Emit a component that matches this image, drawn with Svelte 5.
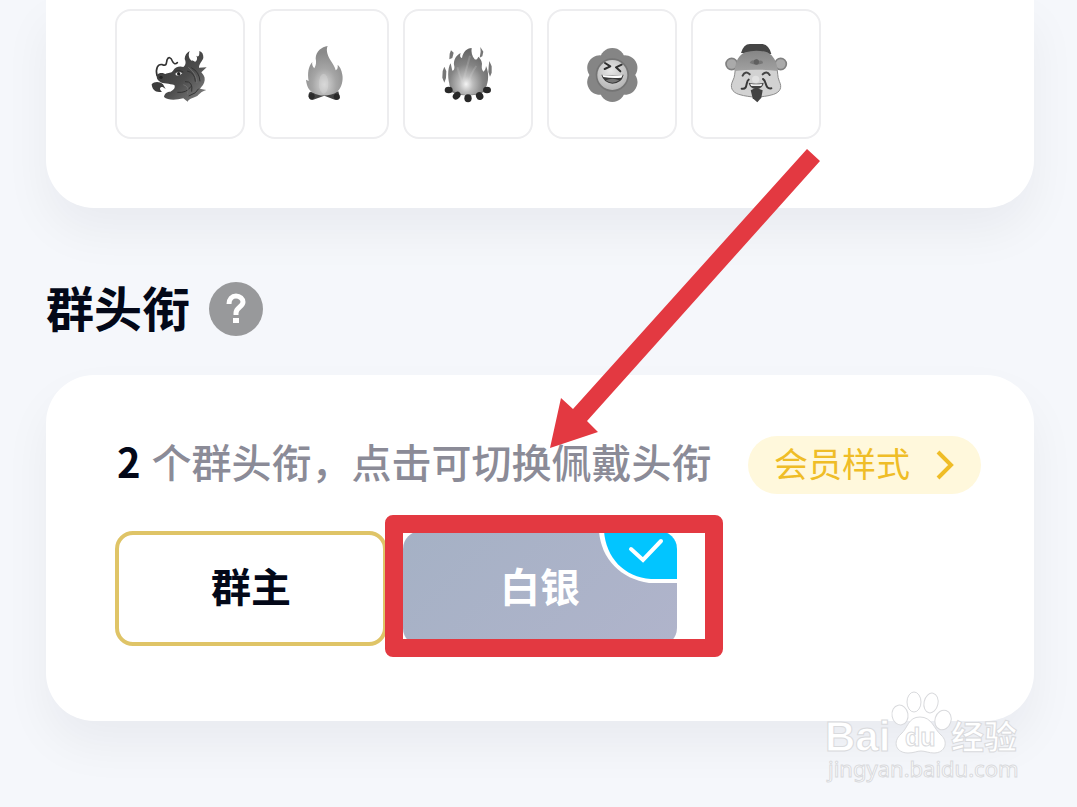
<script>
  const badges = [
    { id: 'dragon', label: '龙' },
    { id: 'flame', label: '火苗' },
    { id: 'bonfire', label: '篝火' },
    { id: 'flower', label: '笑脸花' },
    { id: 'fortune', label: '财神' }
  ];
  const petals = [0, 60, 120, 180, 240, 300];
  let selected = $state('silver');
</script>

<main class="page">
  <section class="card badges">
    {#each badges as badge}
      <button class="tile" aria-label={badge.label}>
        <svg viewBox="0 0 240 270" aria-hidden="true">
          {#if badge.id === 'dragon'}
            <defs>
              <linearGradient id="dragonSkin" x1="0" y1="0" x2="1" y2="1">
                <stop offset="0" stop-color="#303030" />
                <stop offset=".55" stop-color="#4c4c4c" />
                <stop offset="1" stop-color="#888" />
              </linearGradient>
            </defs>
            <path d="M51 137C46 116 53 101 67 104C79 109 79 102 81 90C85 79 93 82 97 93C101 103 107 103 112 98" fill="none" stroke="#333" stroke-width="5" stroke-linecap="round" />
            <path d="M51 135C58 126 70 129 76 132C85 127 94 130 99 122C106 111 118 107 130 111C137 106 139 97 134 87C134 76 140 68 149 63C143 77 148 86 154 92C158 91 162 93 165 96C172 91 173 84 169 77C174 81 179 81 178 63C187 66 191 74 190 84C187 94 177 101 177 113L200 112L184 127C191 136 195 140 194 151C193 162 186 169 180 176L199 180C181 185 178 194 170 199C162 204 149 204 143 215L130 205C106 211 83 211 72 201C73 190 82 185 91 185C101 180 107 174 103 165C89 160 68 161 60 155C51 150 49 143 51 135Z" fill="url(#dragonSkin)" />
            <path d="M35 163C43 154 59 154 69 163L77 177L68 171C60 170 56 177 66 185C48 190 36 179 35 163Z" fill="#3d3d3d" />
            <path d="M106 131Q114 122 127 130Q120 138 108 136Z" fill="#eee" />
            <circle cx="116" cy="131" r="5" fill="#222" />
            <path d="M105 124Q117 117 130 126M141 123Q165 127 166 155M154 113Q178 125 180 154M135 155Q160 153 155 185M112 187Q140 190 153 169M146 198Q170 190 176 176" fill="none" stroke="#333" stroke-width="3" />
            <path d="M145 112Q170 130 171 159M130 164Q150 169 142 193" fill="none" stroke="#707070" stroke-width="3" />
            <circle cx="63" cy="142" r="5" fill="#222" />
          {:else if badge.id === 'flame'}
            <defs>
              <radialGradient id="flameGlow" cx=".5" cy=".78" r=".65">
                <stop offset="0" stop-color="#d7d7d7" />
                <stop offset=".5" stop-color="#a5a5a5" />
                <stop offset="1" stop-color="#8a8a8a" />
              </radialGradient>
            </defs>
            <path d="M78 185Q91 188 119 194Q150 188 163 184L168 204Q162 214 148 208L121 197L92 208Q79 213 75 203Q71 191 78 185Z" fill="#444" />
            <circle cx="83" cy="199" r="9" fill="#292929" /><circle cx="158" cy="200" r="9" fill="#292929" />
            <path d="M131 48C113 51 96 63 95 85C97 97 97 105 91 115C86 110 83 102 85 96C73 109 70 131 74 153L66 149C68 167 74 181 87 188C104 200 142 199 159 186C174 173 178 149 175 134C173 118 166 108 161 104C162 114 160 118 155 121C151 102 135 91 130 70C128 62 128 54 131 48Z" fill="url(#flameGlow)" />
            <ellipse cx="119" cy="161" rx="14" ry="30" fill="#ddd" opacity=".35" />
          {:else if badge.id === 'bonfire'}
            <defs>
              <radialGradient id="bonfireGlow" cx=".45" cy=".77" r=".7">
                <stop offset="0" stop-color="#f4f4f4" />
                <stop offset=".25" stop-color="#bbb" />
                <stop offset=".6" stop-color="#858585" />
                <stop offset="1" stop-color="#686868" />
              </radialGradient>
            </defs>
            <path d="M64 163Q120 218 176 163L170 185Q121 207 71 187Z" fill="#777" />
            <path d="M131 54C116 55 105 66 102 84C95 82 96 75 98 69C84 76 76 91 78 105C81 114 78 122 73 122L68 100C58 114 58 151 68 173C84 202 156 202 172 174C183 157 183 126 174 108C173 116 172 121 166 125C160 116 161 111 162 101C161 91 157 86 151 80C148 87 145 90 140 88C132 79 129 65 131 54Z" fill="url(#bonfireGlow)" />
            <path d="M126 77Q114 120 106 154M145 108Q128 130 123 158M88 112Q94 137 105 163" fill="none" stroke="#ddd" stroke-width="6" opacity=".2" />
            <path d="M69 61L77 68L73 84L64 88L65 71ZM157 51L166 65L163 79L155 83L158 65ZM49 110L55 124L54 144L49 158L43 143L44 123ZM184 93L191 109L191 128L186 140L181 126L182 109Z" fill="#777" />
            <g fill="#292929">
              <ellipse cx="62" cy="180" rx="12" ry="10" /><ellipse cx="86" cy="197" rx="13" ry="10" transform="rotate(-45 86 197)" />
              <ellipse cx="120" cy="205" rx="11" ry="12" /><ellipse cx="155" cy="198" rx="11" ry="12" transform="rotate(-25 155 198)" />
              <ellipse cx="177" cy="180" rx="12" ry="10" />
            </g>
          {:else if badge.id === 'flower'}
            <defs>
              <radialGradient id="faceGlow" cx=".45" cy=".35" r=".65">
                <stop offset="0" stop-color="#e8e8e8" /><stop offset="1" stop-color="#b5b5b5" />
              </radialGradient>
            </defs>
            <circle cx="121" cy="135" r="66" fill="#808080" />
            {#each petals as angle}
              <ellipse cx="121" cy="89" rx="37" ry="35" fill="#858585" transform={`rotate(${angle} 121 135)`} />
            {/each}
            <circle cx="121" cy="135" r="50" fill="#747474" />
            <circle cx="121" cy="135" r="45" fill="url(#faceGlow)" />
            <path d="M99 99L115 109L98 117M149 104L132 112L145 124" fill="none" stroke="#2f2f2f" stroke-width="6" stroke-linecap="round" stroke-linejoin="round" />
            <path d="M88 134Q121 139 155 134Q149 160 121 161Q95 158 88 134Z" fill="#393939" />
            <path d="M91 135Q121 140 152 135L148 143Q119 145 94 141Z" fill="#fff" />
            <path d="M101 151Q121 141 142 151Q121 165 101 151Z" fill="#777" />
          {:else}
            <defs>
              <linearGradient id="hatShade" x1="0" y1="0" x2="0" y2="1">
                <stop offset="0" stop-color="#858585" /><stop offset="1" stop-color="#a1a1a1" />
              </linearGradient>
            </defs>
            <circle cx="47" cy="102" r="17" fill="#aaa" stroke="#808080" stroke-width="5" />
            <circle cx="194" cy="102" r="17" fill="#aaa" stroke="#808080" stroke-width="5" />
            <path d="M75 69Q83 41 103 42H140Q160 46 166 72Z" fill="#454545" />
            <path d="M60 110C55 128 58 138 50 153C41 172 48 186 68 193C88 199 103 200 120 202C138 200 154 199 173 193C193 186 199 172 190 154C183 138 187 128 181 110Z" fill="#d2d2d2" stroke="#8c8c8c" stroke-width="3" />
            <path d="M56 123Q60 77 88 67Q121 57 154 67Q180 79 186 123Q120 115 56 123Z" fill="url(#hatShade)" />
            <path d="M101 99Q105 88 116 92Q122 83 129 92Q141 89 141 100Q121 108 101 99Z" fill="#777" />
            <circle cx="121" cy="96" r="8" fill="#5f5f5f" />
            <path d="M80 137Q87 121 101 133M140 133Q152 121 161 135" fill="none" stroke="#444" stroke-width="6" stroke-linecap="round" />
            <circle cx="119" cy="148" r="11" fill="#e2e2e2" />
            <path d="M98 158Q120 164 143 158Q141 176 120 178Q100 174 98 158Z" fill="#444" />
            <path d="M102 161Q121 165 139 161L136 168H106Z" fill="#eee" />
            <path d="M98 149C88 154 97 180 77 176M141 147C153 153 145 178 166 175" fill="none" stroke="#393939" stroke-width="6" stroke-linecap="round" />
            <path d="M104 181Q119 170 140 181L136 203L124 217L110 205Z" fill="#424242" />
          {/if}
        </svg>
      </button>
    {/each}
  </section>

  <header class="heading">
    <h1>群头衔</h1>
    <button class="help" aria-label="帮助">
      <svg viewBox="0 0 54 54" aria-hidden="true">
        <circle cx="27" cy="27" r="27" fill="#98999b" />
        <path d="M20 22C20 17 23 14 27 14C31 14 34 17 34 20C34 25 27 25 27 31V33" fill="none" stroke="#fff" stroke-width="5" />
        <rect x="24" y="36" width="6" height="5" fill="#fff" />
      </svg>
    </button>
  </header>

  <section class="card titles">
    <div class="summary">
      <p><b>2</b> 个群头衔，点击可切换佩戴头衔</p>
      <a class="member" href="#member">
        <span>会员样式</span>
        <svg viewBox="0 0 20 30" aria-hidden="true"><path d="M3 2L16 15L3 28" fill="none" stroke="#efbd27" stroke-width="4" /></svg>
      </a>
    </div>
    <div class="options">
      <button class="option owner" aria-pressed={selected === 'owner'} onclick={() => (selected = 'owner')}>群主</button>
      <div class="marked">
        <button class="option silver" aria-pressed={selected === 'silver'} onclick={() => (selected = 'silver')}>
          白银
          {#if selected === 'silver'}
            <svg class="check" viewBox="0 0 78 52" aria-hidden="true">
              <path d="M0 0H78V52H50C22 48 2 28 0 0Z" fill="#fff" />
              <path d="M5 0H78V48H52C25 46 7 27 5 0Z" fill="#02c5ff" />
              <path d="M32 18L44 29L62 10" fill="none" stroke="#fff" stroke-width="4" stroke-linecap="round" />
            </svg>
          {/if}
        </button>
        <span class="frame"></span>
        <svg class="arrow" viewBox="0 0 270 300" aria-hidden="true">
          <path d="M257 0L270 12L37 272L48 283L0 299L11 249L23 260Z" fill="#e33941" />
        </svg>
      </div>
    </div>
  </section>

  <svg class="watermark" viewBox="0 0 200 100" role="img" aria-label="Baidu经验">
    <g fill="#fff" stroke="#d9dadd" stroke-width="1">
      <text x="3" y="61" class="brand">Bai</text>
      <ellipse cx="78" cy="25" rx="8" ry="10" transform="rotate(-10 78 25)" />
      <ellipse cx="92" cy="12" rx="7" ry="10" />
      <ellipse cx="109" cy="13" rx="7" ry="10" transform="rotate(12 109 13)" />
      <ellipse cx="121" cy="30" rx="8" ry="10" transform="rotate(18 121 30)" />
      <path d="M98 27C86 27 86 38 79 44C70 52 74 63 86 63C92 63 95 61 99 61C103 61 107 63 112 63C123 63 127 52 119 45C112 39 110 27 98 27Z" />
      <text x="83" y="56" class="du">du</text>
      <text x="129" y="59" class="jingyan">经验</text>
      <text x="6" y="87" class="address">jingyan.baidu.com</text>
    </g>
  </svg>
</main>

<style>
  :global(body) { margin: 0; background: #f5f7fb; }
  :global(*) { box-sizing: border-box; }
  .page {
    position: relative;
    min-height: 100vh;
    padding: 0 43px 86px 46px;
    overflow: hidden;
    color: #030818;
    font-family: "Noto Sans CJK SC", sans-serif;
  }
  button { padding: 0; border: 0; font: inherit; color: inherit; cursor: pointer; }
  svg { display: block; }
  .card {
    background: #fff;
    border-radius: 48px;
    box-shadow: 0 24px 48px rgba(20, 20, 30, .05);
  }
  .badges {
    display: flex;
    flex-wrap: wrap;
    gap: 14px;
    padding: 9px 69px 69px;
    border-radius: 0 0 48px 48px;
  }
  .tile {
    display: grid;
    place-items: center;
    width: 130px;
    height: 130px;
    padding-top: 2px;
    border: 2px solid #ededef;
    border-radius: 16px;
    background: #fff;
  }
  .tile svg { width: 80px; height: 90px; }
  .heading {
    display: flex;
    align-items: center;
    gap: 19px;
    height: 167px;
    padding-top: 34px;
  }
  h1 { margin: 0; font-size: 48px; line-height: 64px; font-weight: 700; }
  .heading h1 { padding-bottom: 6px; }
  .help { width: 54px; height: 54px; border-radius: 50%; background: none; }
  .titles { padding: 61px 53px 75px 69px; }
  .summary { display: flex; align-items: center; justify-content: space-between; height: 58px; }
  p { margin: 0; padding: 0 0 8px 2px; font-size: 40px; line-height: 58px; font-weight: 500; color: #8b8b97; white-space: nowrap; }
  p b { margin-right: 2px; font-weight: 700; color: #030818; }
  .member {
    display: flex;
    align-items: center;
    justify-content: space-between;
    width: 233px;
    height: 58px;
    padding: 0 26px;
    border-radius: 29px;
    background: #fff8dc;
    color: #efbd27;
    font-size: 34px;
    line-height: 58px;
    text-decoration: none;
  }
  .member span { padding-bottom: 4px; }
  .member svg { width: 20px; height: 30px; }
  .options { display: flex; gap: 16px; margin-top: 37px; }
  .option {
    width: 272px;
    height: 115px;
    padding-bottom: 8px;
    border-radius: 18px;
    font-size: 40px;
    line-height: 58px;
    font-weight: 700;
  }
  .owner { border: 4px solid #dfc467; background: #fff; }
  .marked { position: relative; }
  .silver {
    position: relative;
    display: block;
    width: 274px;
    overflow: hidden;
    background: linear-gradient(135deg, #a5b1c5, #b0b4cb);
    color: #fff;
  }
  .check { position: absolute; top: 0; right: 0; width: 78px; height: 52px; }
  .frame {
    position: absolute;
    inset: -16px -46px -11px -18px;
    border: 18px solid #e33941;
    border-radius: 8px;
    pointer-events: none;
  }
  .arrow {
    position: absolute;
    left: 147px;
    bottom: 197px;
    width: 270px;
    height: 300px;
    pointer-events: none;
  }
  .watermark { position: absolute; right: 55px; bottom: 17px; width: 200px; height: 100px; overflow: visible; }
  .brand { font: 700 42px "Liberation Sans", sans-serif; }
  .du { font: 700 25px "Liberation Sans", sans-serif; }
  .jingyan { font: 700 33px "Noto Sans CJK SC", sans-serif; }
  .address { font: 400 22px "Noto Sans", sans-serif; }
</style>
